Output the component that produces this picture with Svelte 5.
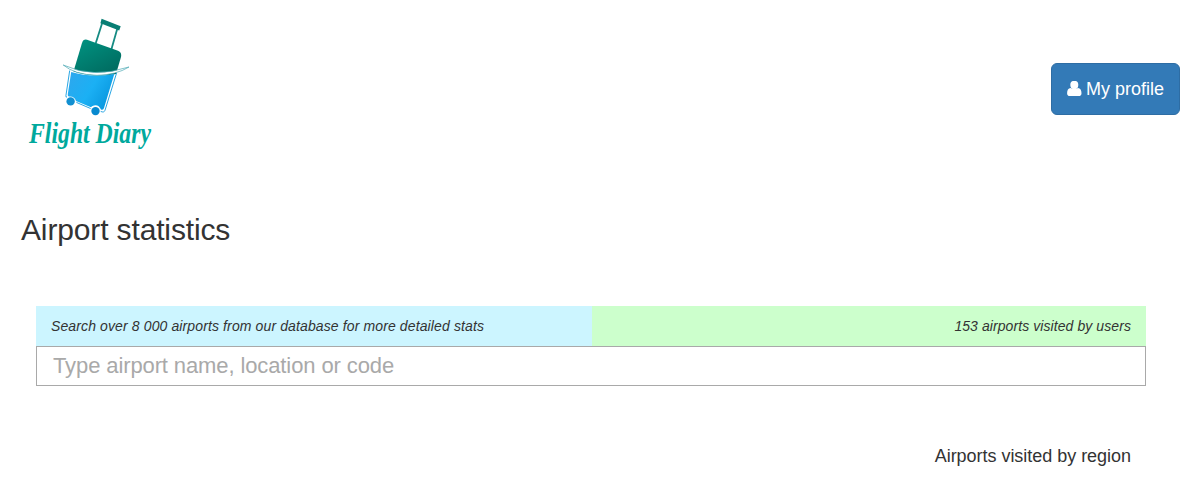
<script>
  let query = $state('');
</script>

<div class="page">
  <header>
    <svg class="logo" width="140" height="150" viewBox="15 10 140 150" role="img" aria-label="Flight Diary">
      <defs>
        <linearGradient id="teal" x1="0" y1="0" x2="0.7" y2="1">
          <stop offset="0" stop-color="#009482" />
          <stop offset="1" stop-color="#006b60" />
        </linearGradient>
        <linearGradient id="sky" x1="0" y1="0.2" x2="1" y2="0.7">
          <stop offset="0" stop-color="#2ca8ee" />
          <stop offset="0.5" stop-color="#1bb0f4" />
          <stop offset="1" stop-color="#0795dd" />
        </linearGradient>
      </defs>
      <path d="M95.8 43 102.2 23M111.2 50 117.2 29" fill="none" stroke="#168b83" stroke-width="1.8" />
      <path d="M101.6 18.8 120.7 26.2 119.2 30.6 100.4 23.2Z" fill="#087e74" />
      <path d="M87 39.7 118 50.7Q122 52.3 121 57L116 74Q94 78 73.5 71.5L82 43Q83.3 38.7 87 39.7Z" fill="url(#teal)" />
      <path d="M71.2 72Q91 78 114.3 74L104 108Q103.4 110.3 101 109.5Q98.5 104.3 94 105.5Q91.5 106.3 91 107.2L76 101Q74.5 96.4 70 96.5Q67.3 97 67.8 94.3Z" fill="url(#sky)" />
      <path d="M69.7 70.5 65.9 95.8Q65.9 98 67 96.8M76.4 102.4 90.6 108.5M100.7 111.4Q104 113 105 110.3L116.6 73" fill="none" stroke="#2ba7e4" stroke-width="1" />
      <path d="M63.2 65Q93 79 129 67Q116 75 97 75.3Q75 74.8 63.2 65Z" fill="#fff" stroke="#4ba8b3" stroke-width="0.7" />
      <circle cx="70.6" cy="101.4" r="4.2" fill="#118fd1" />
      <circle cx="95.5" cy="111.1" r="4.2" fill="#0789cf" />
      <text class="wordmark" x="29" y="143" textLength="122" lengthAdjust="spacingAndGlyphs">Flight Diary</text>
    </svg>
    <button class="profile" type="button">
      <svg width="15" height="16" viewBox="0 0 15 16" aria-hidden="true">
        <path fill="#fff" d="M3.6 6.9C1.2 7.1 .1 9.2 .1 12.2Q.1 15 2.8 15H11.8Q14.5 15 14.5 12.2C14.5 9.2 13.4 7.1 11 6.9Q9.5 7.8 7.3 7.8T3.6 6.9Z" />
        <ellipse cx="7.3" cy="4" rx="4" ry="4.2" fill="#fff" />
      </svg>
      <span>My profile</span>
    </button>
  </header>

  <h1>Airport statistics</h1>

  <main>
    <div class="summary">
      <div class="hint">Search over 8 000 airports from our database for more detailed stats</div>
      <div class="visited">153 airports visited by users</div>
    </div>
    <input bind:value={query} placeholder="Type airport name, location or code" />
    <h2>Airports visited by region</h2>
  </main>
</div>

<style>
  :global(body) {
    margin: 0;
    background: #fff;
    overflow: hidden;
  }
  .page {
    box-sizing: border-box;
    height: 478px;
    overflow: hidden;
    padding: 10px 24px 0 15px;
    color: #333;
    font-family: "Liberation Sans", Arial, sans-serif;
  }
  header {
    display: flex;
    justify-content: space-between;
    align-items: flex-start;
    height: 150px;
  }
  .logo {
    display: block;
    overflow: visible;
  }
  .wordmark {
    font: italic 700 30px "Liberation Serif", cursive;
    fill: #00a99d;
  }
  .profile {
    display: flex;
    align-items: center;
    gap: 4px;
    box-sizing: border-box;
    width: 129px;
    height: 52px;
    margin: 53px 0 0;
    padding: 0 0 0 15px;
    border: 1px solid #2e6da4;
    border-radius: 6px;
    background: #337ab7;
    color: #fff;
    font: 18px "Liberation Sans", Arial, sans-serif;
    white-space: nowrap;
  }
  h1 {
    margin: 53px 0 0 6px;
    font-size: 30px;
    font-weight: 400;
    line-height: 33px;
    letter-spacing: -0.14px;
  }
  main {
    margin: 60px 34px 0 21px;
  }
  .summary {
    display: grid;
    grid-template-columns: 556px 1fr;
    height: 40px;
    font-size: 14px;
    font-style: italic;
    line-height: 40px;
  }
  .hint {
    padding-left: 15px;
    background: #ccf5ff;
    letter-spacing: 0.12px;
  }
  .visited {
    padding-right: 15px;
    background: #cfc;
    text-align: right;
    letter-spacing: 0.08px;
  }
  input {
    display: block;
    box-sizing: border-box;
    width: 100%;
    height: 40px;
    padding: 0 16px;
    border: 1px solid #a9a9a9;
    border-radius: 0;
    outline: 0;
    background: #fff;
    color: #333;
    font: 22px "Liberation Sans", Arial, sans-serif;
    letter-spacing: -0.11px;
  }
  input::placeholder {
    color: #a9a9a9;
    opacity: 1;
  }
  h2 {
    margin: 60px 15px 0 0;
    font-size: 18px;
    font-weight: 400;
    line-height: 20px;
    letter-spacing: -0.03px;
    text-align: right;
  }
</style>
